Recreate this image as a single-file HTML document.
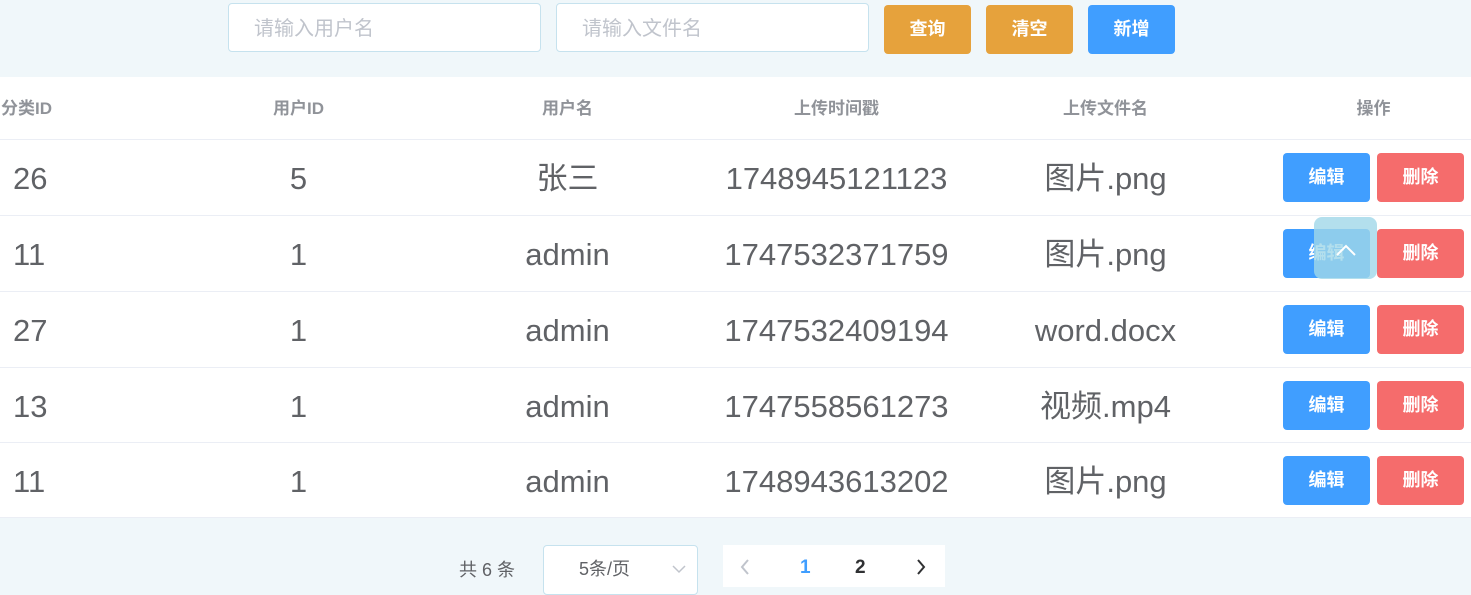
<!DOCTYPE html><html><head><meta charset="utf-8"><style>
body{margin:0;width:1471px;height:587px;background:#f0f7fa;position:relative;overflow:hidden;font-family:"Liberation Sans","Noto Sans CJK SC",sans-serif}
.a{position:absolute}
.inp{background:#fff;border:1px solid #c6e2ee;border-radius:4px;box-sizing:border-box;height:49px;top:3px;color:#c0c4cc;font-size:20px;line-height:51px;padding-left:25px}
.b{position:absolute;width:87px;height:49px;border-radius:4px;color:#fff;font-weight:bold;font-size:18px;text-align:center;line-height:49px}
.tb{position:absolute;left:0;top:77px;width:1471px;height:440px;background:#fff}
.h{position:absolute;top:0;height:62px;line-height:64px;color:#909399;font-weight:bold;font-size:17px;text-align:center;width:269px}
.r{position:absolute;left:0;width:1471px;height:76px;border-top:1px solid #ebeef5;box-sizing:border-box}
.c{position:absolute;top:0;height:75px;line-height:78px;color:#606266;font-size:31px;text-align:center;width:269px}
</style></head><body>
<div class="a inp" style="left:228px;width:313px">请输入用户名</div>
<div class="a inp" style="left:556px;width:313px">请输入文件名</div>
<div class="b" style="left:884px;top:5px;background:#e6a23c">查询</div>
<div class="b" style="left:986px;top:5px;background:#e6a23c">清空</div>
<div class="b" style="left:1088px;top:5px;background:#409eff">新增</div>
<div class="tb">
<div class="h" style="left:0;width:60px;text-align:left;padding-left:1px">分类ID</div>
<div class="h" style="left:164px">用户ID</div>
<div class="h" style="left:433px">用户名</div>
<div class="h" style="left:702px">上传时间戳</div>
<div class="h" style="left:971px">上传文件名</div>
<div class="h" style="left:1239px">操作</div>
</div>
<div id="rows"></div>
<script>
var d=[["26","5","张三","1748945121123","图片.png"],["11","1","admin","1747532371759","图片.png"],["27","1","admin","1747532409194","word.docx"],["13","1","admin","1747558561273","视频.mp4"],["11","1","admin","1748943613202","图片.png"]];
var tops=[139,215,291,367,442],h="";
d.forEach(function(r,i){var t=tops[i];h+='<div class="r" style="top:'+t+'px;background:#fff;height:'+(i==4?75:76)+'px">'+
'<div class="c" style="left:13px;width:60px;text-align:left">'+r[0]+'</div>'+
'<div class="c" style="left:164px">'+r[1]+'</div><div class="c" style="left:433px">'+r[2]+'</div><div class="c" style="left:702px">'+r[3]+'</div><div class="c" style="left:971px">'+r[4]+'</div>'+
'<div class="b" style="left:1283px;top:13px;background:#409eff">编辑</div><div class="b" style="left:1377px;top:13px;background:#f56c6c">删除</div></div>';});
document.getElementById('rows').innerHTML=h;
</script>
<div class="a" style="left:0;top:517px;width:1471px;height:1px;background:#ebeef5"></div>
<div class="a" style="left:1314px;top:217px;width:63px;height:62px;border-radius:8px;background:rgba(160,215,232,0.8)"><svg width="63" height="62"><path d="M23 38 L32 29 L41 38" stroke="#fff" stroke-width="2" fill="none"/></svg></div>
<div class="a" style="left:459px;top:556px;font-size:18px;color:#606266">共 6 条</div>
<div class="a" style="left:543px;top:545px;width:155px;height:50px;background:#fff;border:1px solid #c6e2ee;border-radius:4px;box-sizing:border-box;font-size:18px;color:#606266;line-height:46px;padding-left:35px">5条/页<svg style="position:absolute;left:128px;top:18px" width="14" height="10"><path d="M1 2 L7 8 L13 2" stroke="#c0c4cc" stroke-width="1.5" fill="none"/></svg></div>
<div class="a" style="left:723px;top:545px;width:222px;height:42px;background:#fff">
<svg style="position:absolute;left:17px;top:14px" width="10" height="16"><path d="M8 1 L2 8 L8 15" stroke="#c0c4cc" stroke-width="2" fill="none"/></svg>
<div class="a" style="left:77px;top:12px;font-size:19px;font-weight:bold;color:#409eff">1</div>
<div class="a" style="left:132px;top:12px;font-size:19px;font-weight:bold;color:#303133">2</div>
<svg style="position:absolute;left:193px;top:14px" width="10" height="16"><path d="M2 1 L8 8 L2 15" stroke="#303133" stroke-width="2" fill="none"/></svg>
</div>
</body></html>
